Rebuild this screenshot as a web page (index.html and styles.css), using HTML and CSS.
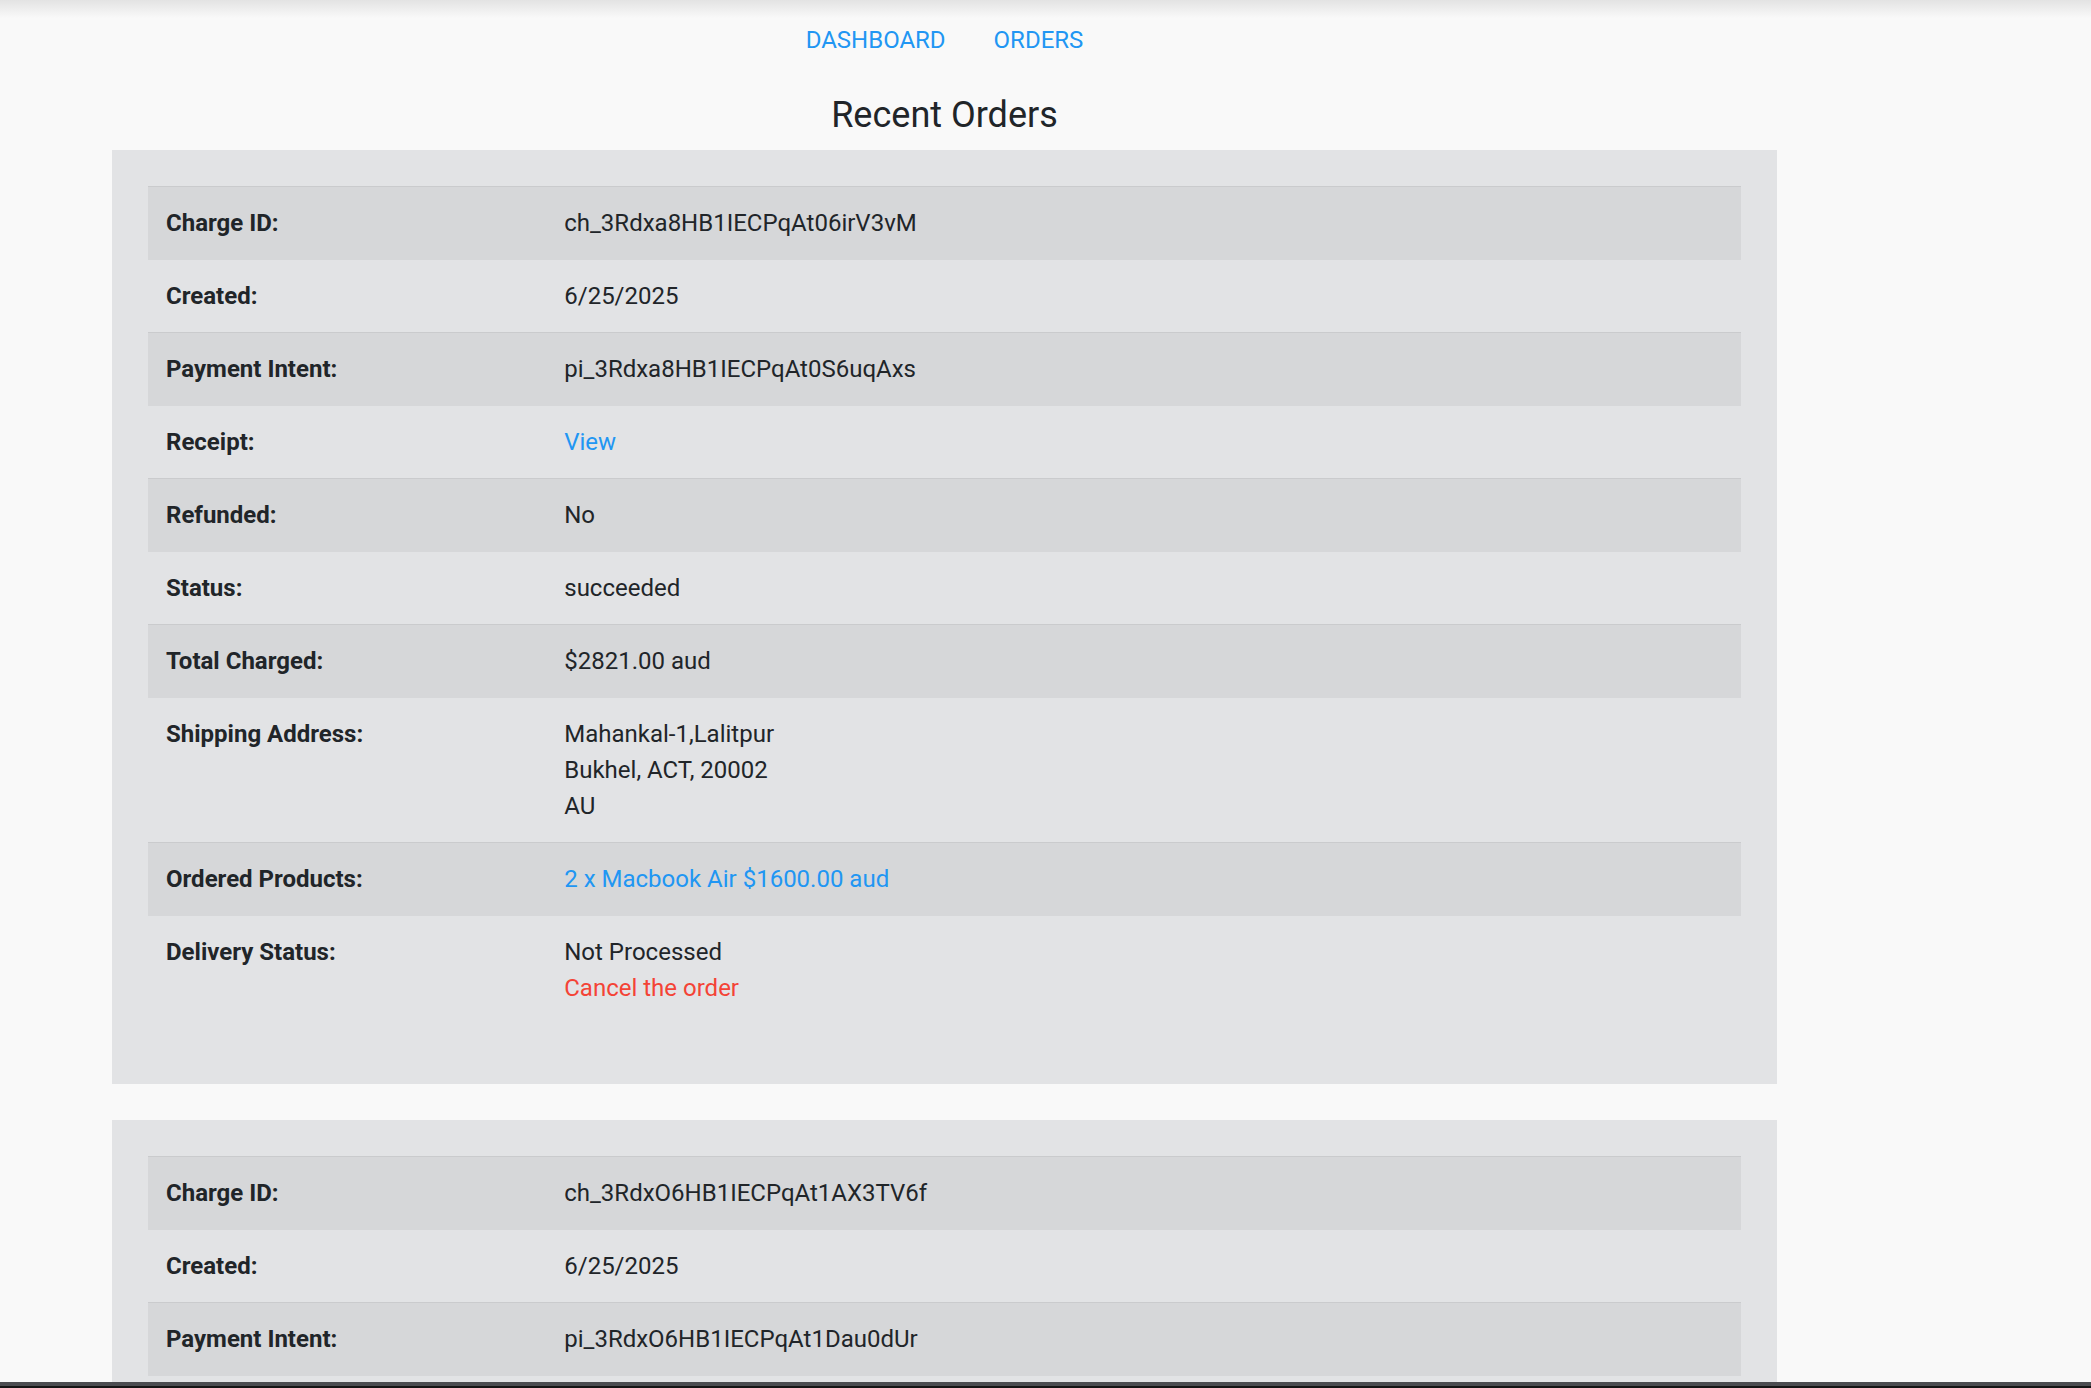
FILE: index.html
```html
<!DOCTYPE html>
<html lang="en">
<head>
<meta charset="utf-8">
<title>Recent Orders</title>
<link rel="stylesheet" href="styles.css">
</head>
<body>
<div class="container">
  <nav class="topnav">
    <a class="nav-link" href="#">DASHBOARD</a>
    <a class="nav-link" href="#">ORDERS</a>
  </nav>
  <h1 class="page-title">Recent Orders</h1>

  <section class="order-card">
    <table class="order-table">
      <tbody>
        <tr><th>Charge ID:</th><td>ch_3Rdxa8HB1IECPqAt06irV3vM</td></tr>
        <tr><th>Created:</th><td>6/25/2025</td></tr>
        <tr><th>Payment Intent:</th><td>pi_3Rdxa8HB1IECPqAt0S6uqAxs</td></tr>
        <tr><th>Receipt:</th><td><a class="link" href="#">View</a></td></tr>
        <tr><th>Refunded:</th><td>No</td></tr>
        <tr><th>Status:</th><td>succeeded</td></tr>
        <tr><th>Total Charged:</th><td>$2821.00 aud</td></tr>
        <tr><th>Shipping Address:</th><td>Mahankal-1,Lalitpur<br>Bukhel, ACT, 20002<br>AU</td></tr>
        <tr><th>Ordered Products:</th><td><a class="link" href="#">2 x Macbook Air $1600.00 aud</a></td></tr>
        <tr><th>Delivery Status:</th><td>Not Processed<br><a class="cancel" href="#">Cancel the order</a></td></tr>
      </tbody>
    </table>
  </section>

  <section class="order-card">
    <table class="order-table">
      <tbody>
        <tr><th>Charge ID:</th><td>ch_3RdxO6HB1IECPqAt1AX3TV6f</td></tr>
        <tr><th>Created:</th><td>6/25/2025</td></tr>
        <tr><th>Payment Intent:</th><td>pi_3RdxO6HB1IECPqAt1Dau0dUr</td></tr>
        <tr><th>Receipt:</th><td><a class="link" href="#">View</a></td></tr>
        <tr><th>Refunded:</th><td>No</td></tr>
        <tr><th>Status:</th><td>succeeded</td></tr>
      </tbody>
    </table>
  </section>
</div>
<div class="window-edge"></div>
</body>
</html>
```
FILE: styles.css
```css
html, body {
  margin: 0;
  padding: 0;
}

body {
  background: #f9f9f9 linear-gradient(#e3e3e3, #f9f9f9 18px) no-repeat;
  font-family: Roboto, "Liberation Sans", Arial, sans-serif;
  font-size: 24px;
  line-height: 36px;
  color: #212529;
}

.container {
  width: 1665px;
  margin-left: 112px;
}

.topnav {
  display: flex;
  justify-content: center;
  gap: 48px;
  padding-top: 22px;
}

.nav-link {
  color: #2196f3;
  text-decoration: none;
}

.page-title {
  margin: 37px 0 15px;
  font-size: 36px;
  line-height: 40px;
  font-weight: 400;
  text-align: center;
  color: #212529;
}

.order-card {
  background: #e2e3e5;
  padding: 36px;
  margin-bottom: 36px;
}

.order-table {
  width: 100%;
  border-collapse: collapse;
  margin-bottom: 24px;
}

.order-table th,
.order-table td {
  padding: 18px;
  text-align: left;
  vertical-align: top;
  border-top: 1px solid #d6d7d9;
}

.order-table th {
  width: 25%;
  font-weight: 700;
}

.order-table td {
  font-weight: 400;
}

.order-table tr:nth-child(odd) {
  background: #d6d7d9;
}

.order-table tr:nth-child(odd) th,
.order-table tr:nth-child(odd) td {
  border-top-color: #cacbcd;
}

.link {
  color: #2196f3;
  text-decoration: none;
}

.cancel {
  color: #f44336;
  text-decoration: none;
}

.window-edge {
  position: fixed;
  left: 0;
  right: 0;
  bottom: 0;
  height: 6px;
  background: #4b4c50;
  border-bottom: 2px solid #151515;
  box-sizing: border-box;
}
```
